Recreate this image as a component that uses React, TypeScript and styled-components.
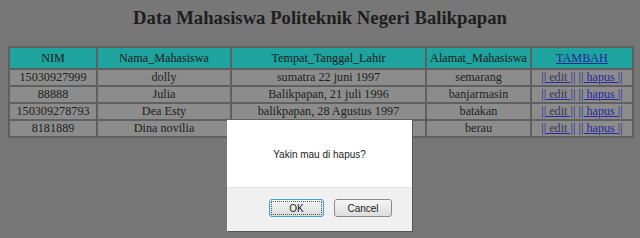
import styled, { createGlobalStyle } from "styled-components";

const GlobalStyle = createGlobalStyle`
  html, body {
    margin: 0;
    padding: 0;
    background: #777777;
  }
  body {
    padding: 8px;
    font-family: "Liberation Serif", "Times New Roman", serif;
    color: #1c1c1c;
  }
`;

const Page = styled.div`
  width: 624px;
`;

const Title = styled.h2`
  margin: 0 0 18px;
  line-height: 20px;
  text-align: center;
  font-size: 18.7px;
  font-weight: bold;
  color: #1e1e1e;
`;

const Table = styled.table`
  width: 624px;
  border-collapse: collapse;
  border: 2px solid #5f5f5f;
  font-size: 12.2px;
  table-layout: fixed;
`;

const Head = styled.th`
  background: #1fa39e;
  font-weight: normal;
  height: 20px;
  border: 2px solid #606060;
  color: #1c1c1c;
  padding: 0;
`;

const Cell = styled.td`
  background: #8c8c8c;
  text-align: center;
  height: 15px;
  border: 2px solid #606060;
  padding: 0;
  line-height: 15px;
  color: #1e1e1e;
`;

const Link = styled.a`
  color: #2626a0;
  text-decoration: underline;
`;

const Visited = styled.span`
  color: #3c3560;
`;

const Dialog = styled.div`
  position: absolute;
  left: 227px;
  top: 120px;
  width: 185px;
  height: 111px;
  background: #ffffff;
  box-shadow: 1px 1px 0 #555;
  display: flex;
  flex-direction: column;
  font-family: "Liberation Sans", Arial, sans-serif;
`;

const Message = styled.div`
  height: 67px;
  display: flex;
  align-items: center;
  justify-content: center;
  font-size: 10px;
  color: #222;
  padding-top: 2px;
  box-sizing: border-box;
`;

const Footer = styled.div`
  flex: 1;
  background: #f0f0f0;
  border-top: 1px solid #e2e2e2;
  display: flex;
  justify-content: flex-end;
  align-items: flex-start;
  gap: 10px;
  padding: 11px 20px 0 0;
`;

const Button = styled.button<{ $focus?: boolean; $w: number }>`
  width: ${(p) => p.$w}px;
  height: 18px;
  font-family: "Liberation Sans", Arial, sans-serif;
  font-size: 10px;
  color: #222;
  border-radius: 3px;
  border: 1px solid ${(p) => (p.$focus ? "#3c9fd8" : "#8a8a8a")};
  background: linear-gradient(#f6f6f6, #dddddd);
  padding: 0;
  outline: ${(p) => (p.$focus ? "1px dotted #555" : "none")};
  outline-offset: -3px;
`;

const rows = [
  ["15030927999", "dolly", "sumatra 22 juni 1997", "semarang"],
  ["88888", "Julia", "Balikpapan, 21 juli 1996", "banjarmasin"],
  ["150309278793", "Dea Esty", "balikpapan, 28 Agustus 1997", "batakan"],
  ["8181889", "Dina novilia", "", "berau"],
];

export default function App() {
  return (
    <>
      <GlobalStyle />
      <Page>
        <Title>Data Mahasiswa Politeknik Negeri Balikpapan</Title>
        <Table>
          <colgroup>
            <col style={{ width: 88 }} />
            <col style={{ width: 134 }} />
            <col style={{ width: 195 }} />
            <col style={{ width: 105 }} />
            <col style={{ width: 102 }} />
          </colgroup>
          <thead>
            <tr>
              <Head>NIM</Head>
              <Head>Nama_Mahasiswa</Head>
              <Head>Tempat_Tanggal_Lahir</Head>
              <Head>Alamat_Mahasiswa</Head>
              <Head>
                <Link href="#">TAMBAH</Link>
              </Head>
            </tr>
          </thead>
          <tbody>
            {rows.map((r) => (
              <tr key={r[0]}>
                <Cell>{r[0]}</Cell>
                <Cell>{r[1]}</Cell>
                <Cell>{r[2]}</Cell>
                <Cell>{r[3]}</Cell>
                <Cell>
                  <Link href="#">
                    || <Visited>edit</Visited> ||
                  </Link>{" "}
                  <Link href="#">|| hapus ||</Link>
                </Cell>
              </tr>
            ))}
          </tbody>
        </Table>
      </Page>
      <Dialog>
        <Message>Yakin mau di hapus?</Message>
        <Footer>
          <Button $focus $w={55}>OK</Button>
          <Button $w={58}>Cancel</Button>
        </Footer>
      </Dialog>
    </>
  );
}
